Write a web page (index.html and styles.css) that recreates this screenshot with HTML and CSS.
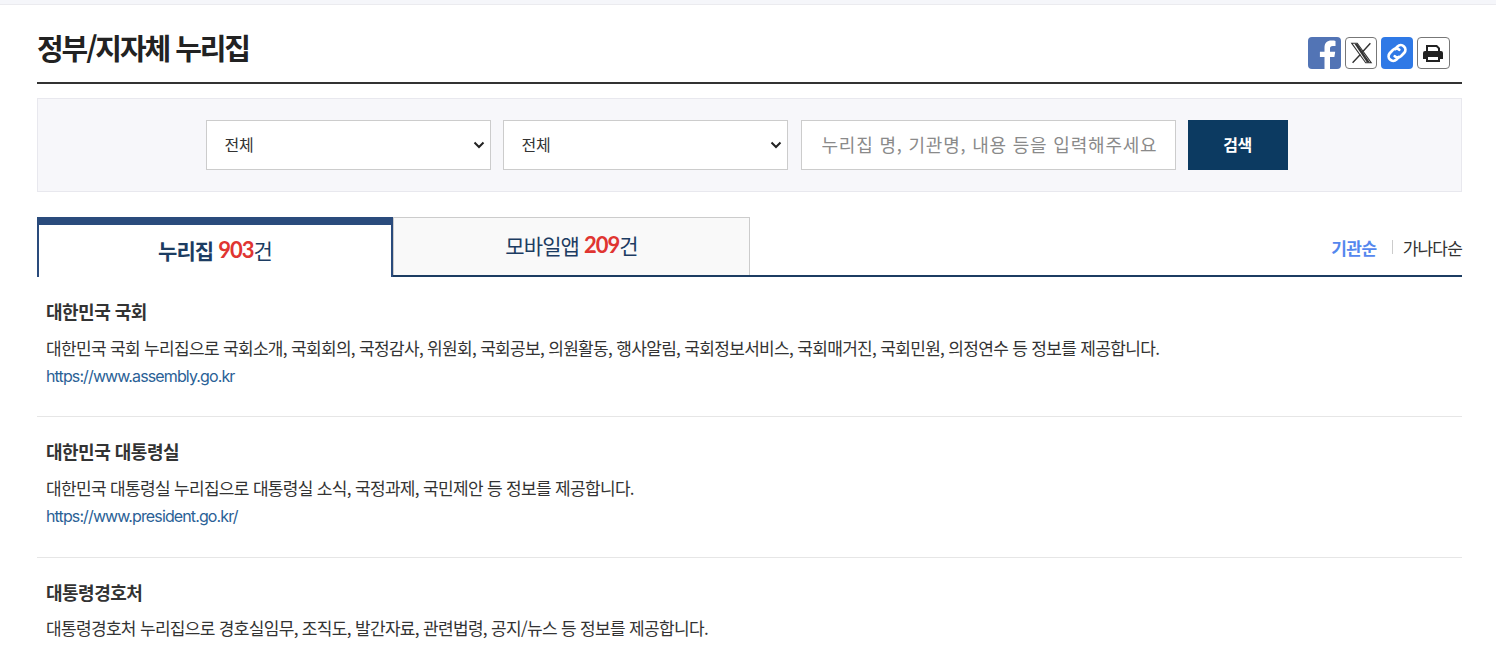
FILE: index.html
```html
<!DOCTYPE html>
<html lang="ko">
<head>
	<meta charset="utf-8">
	<title>정부/지자체 누리집</title>
	<link rel="stylesheet" href="styles.css">
</head>
<body>
	<div class="top-strip"></div>
	<div class="wrap">
		<!-- 제목 -->
		<div class="page-head">
			<h1>정부/지자체 누리집</h1>
			<div class="share">
				<a class="share-btn fb" href="#">
					<svg viewBox="0 0 33 32" width="33" height="32"><path fill="#fff" d="M22 32V20h4.400l.8-5.300H22v-3c0-1.600.7-2.600 2.800-2.600h2.700V3.900c-.7-.1-2.400-.3-4.100-.3-4.200 0-6.900 2.500-6.900 7v4.100h-4.600V20h4.600v12z"/></svg>
				</a>
				<a class="share-btn line" href="#">
					<svg viewBox="0 0 32 32" width="30" height="30"><path fill="none" stroke="#333" stroke-width="1.100" d="M6 5.500h6l15 21h-6z"/><path fill="#333" d="M9 6h3l13.500 20h-3.200z"/><path fill="none" stroke="#333" stroke-width="1.500" d="M26 5.500 17.500 15M15.300 17.600 7 26.500"/></svg>
				</a>
				<a class="share-btn link" href="#">
					<svg viewBox="0 0 32 32" width="32" height="32"><g fill="none" stroke="#fff" stroke-width="2.400" stroke-linecap="round" transform="translate(16 16) scale(1.150) translate(-16 -16)"><path d="M14.500 12.500l2-2.200a4 4 0 0 1 5.800 5.500l-2.800 2.900a4 4 0 0 1-5.500.2"/><path d="M17.500 19.500l-2 2.200a4 4 0 0 1-5.800-5.500l2.800-2.900a4 4 0 0 1 5.500-.2"/></g></svg>
				</a>
				<a class="share-btn line print" href="#">
					<svg viewBox="0 0 31 30" width="31" height="30"><path fill="#222" d="M8 7h11l3 3v5H8z"/><path fill="#fff" d="M10 9h8.200l1.800 1.800V14H10z"/><path fill="#222" d="M7 13h16a2 2 0 0 1 2 2v6h-3v-3H8v3H5v-6a2 2 0 0 1 2-2z"/><path fill="#222" d="M8 17h14v7H8z"/><path fill="#fff" d="M10 19h10v3H10z"/></svg>
				</a>
			</div>
		</div>

		<!-- 검색 -->
		<form class="search-box">
			<select class="sel"><option>전체</option></select>
			<select class="sel"><option>전체</option></select>
			<input class="keyword" type="text" placeholder="누리집 명, 기관명, 내용 등을 입력해주세요">
			<button class="search-btn" type="button">검색</button>
		</form>

		<!-- 탭 -->
		<div class="tab-row">
			<a class="tab on" href="#">누리집 <em>903</em><span>건</span></a>
			<a class="tab" href="#">모바일앱 <em>209</em>건</a>
			<div class="sort">
				<a class="sort-on" href="#">기관순</a>
				<a href="#">가나다순</a>
			</div>
		</div>

		<ul class="site-list">
			<li>
				<strong>대한민국 국회</strong>
				<p>대한민국 국회 누리집으로 국회소개, 국회회의, 국정감사, 위원회, 국회공보, 의원활동, 행사알림, 국회정보서비스, 국회매거진, 국회민원, 의정연수 등 정보를 제공합니다.</p>
				<a href="#">https://www.assembly.go.kr</a>
			</li>
			<li>
				<strong>대한민국 대통령실</strong>
				<p>대한민국 대통령실 누리집으로 대통령실 소식, 국정과제, 국민제안 등 정보를 제공합니다.</p>
				<a href="#">https://www.president.go.kr/</a>
			</li>
			<li>
				<strong>대통령경호처</strong>
				<p class="tight">대통령경호처 누리집으로 경호실임무, 조직도, 발간자료, 관련법령, 공지/뉴스 등 정보를 제공합니다.</p>
			</li>
		</ul>
	</div>
</body>
</html>
```
FILE: styles.css
```css
html,body{
	height:100%;
}
body{
	margin:0;
	overflow:hidden;
	background:#fff;
	color:#333;
	font-family:"Noto Sans CJK KR","Noto Sans",sans-serif;
}
a{
	color:inherit;
	text-decoration:none;
}
.top-strip{
	height:4px;
	background:#f5f6fa;
	border-bottom:1px solid #ebebef;
}
.wrap{
	width:1425px;
	margin-left:37px;
}
.page-head{
	height:79px;
	box-sizing:border-box;
	border-bottom:2px solid #333;
	display:flex;
	justify-content:space-between;
	align-items:flex-start;
}
.page-head h1{
	margin:22px 0 0;
	font-size:29px;
	line-height:40px;
	font-weight:700;
	letter-spacing:-2.1px;
	color:#222;
}
.share{
	display:flex;
	gap:4px;
	margin:32px 12px 0 0;
}
.share-btn{
	width:32px;
	height:32px;
	box-sizing:border-box;
	border-radius:4px;
	overflow:hidden;
	display:flex;
	align-items:center;
	justify-content:center;
}
.fb{
	width:33px;
	background:#5274b5;
}
.link{
	background:#2f79e6;
}
.line{
	border:1px solid #777;
	background:#fff;
}
.print{
	width:33px;
}
.search-box{
	margin-top:14px;
	height:94px;
	box-sizing:border-box;
	background:#f7f7fa;
	border:1px solid #e8e8ee;
	display:flex;
	justify-content:center;
	align-items:center;
	padding-right:6px;
}
.sel{
	appearance:none;
	width:285px;
	height:50px;
	margin-right:12px;
	padding:0 18px 2px;
	background:#fff url("data:image/svg+xml,%3Csvg xmlns='http://www.w3.org/2000/svg' width='12' height='8'%3E%3Cpath d='M1.500 1.500 6 6l4.500-4.500' fill='none' stroke='%23222' stroke-width='2'/%3E%3C/svg%3E") no-repeat right 5px center;
	border:1px solid #ccc;
	border-radius:0;
	font:inherit;
	font-size:16px;
	letter-spacing:-.3px;
	color:#333;
}
.keyword{
	width:375px;
	height:50px;
	box-sizing:border-box;
	margin:0 12px 0 1px;
	padding:0 18px 2px 20px;
	border:1px solid #ccc;
	background:#fff;
	font:inherit;
	font-size:18px;
	letter-spacing:.8px;
}
.keyword::placeholder{
	color:#8a8a8a;
	opacity:1;
}
.search-btn{
	width:100px;
	height:50px;
	padding:0 0 2px;
	border:0;
	background:#0c3a61;
	color:#fff;
	font:inherit;
	font-size:16px;
	font-weight:700;
	letter-spacing:-.4px;
}
.tab-row{
	margin-top:25px;
	height:60px;
	box-sizing:border-box;
	border-bottom:2px solid #1c3c62;
	display:flex;
}
.tab{
	width:357px;
	height:58px;
	box-sizing:border-box;
	border:1px solid #ccc;
	border-bottom:0;
	background:#f9f9f9;
	display:flex;
	justify-content:center;
	align-items:center;
	white-space:pre;
	font-size:21px;
	letter-spacing:-.9px;
	color:#1c3c62;
	padding-bottom:4px;
}
.tab em{
	font-family:Lato,"Noto Sans CJK KR",sans-serif;
	font-size:22px;
	font-style:normal;
	font-weight:700;
	letter-spacing:-1px;
	color:#e03531;
}
.tab.on{
	width:356px;
	height:60px;
	border:0;
	border-top:8px solid #2a4b7c;
	border-left:2px solid #2a4b7c;
	border-right:2px solid #2a4b7c;
	background:#fff;
	font-weight:700;
	padding-bottom:3px;
}
.tab.on span{
	font-weight:400;
}
.sort{
	margin-left:auto;
	display:flex;
	align-items:center;
	padding-top:2px;
	font-size:17px;
	letter-spacing:-.8px;
	color:#333;
}
.sort a+a{
	margin-left:15px;
	padding-left:11px;
	background:linear-gradient(#ccc,#ccc) left center/1px 14px no-repeat;
}
.sort-on{
	color:#5487ee;
	font-weight:700;
	letter-spacing:-.5px;
}
.site-list{
	margin:0;
	padding:0;
	list-style:none;
}
.site-list li{
	height:141px;
	box-sizing:border-box;
	padding:19px 9px 0;
	border-bottom:1px solid #e6e6e6;
}
.site-list li:first-child{
	height:140px;
}
.site-list li:last-child{
	height:87px;
	border-bottom:0;
}
.site-list strong{
	display:block;
	font-size:18px;
	line-height:30px;
	font-weight:700;
	letter-spacing:-.5px;
	color:#333;
}
.site-list p{
	margin:8px 0 0;
	font-size:17px;
	line-height:28px;
	letter-spacing:-.67px;
	color:#333;
}
.site-list p.tight{
	margin-top:7px;
}
.site-list a{
	display:block;
	font-family:Inter,"Noto Sans CJK KR",sans-serif;
	font-size:16px;
	line-height:28px;
	letter-spacing:-.88px;
	color:#2a6196;
}
```
